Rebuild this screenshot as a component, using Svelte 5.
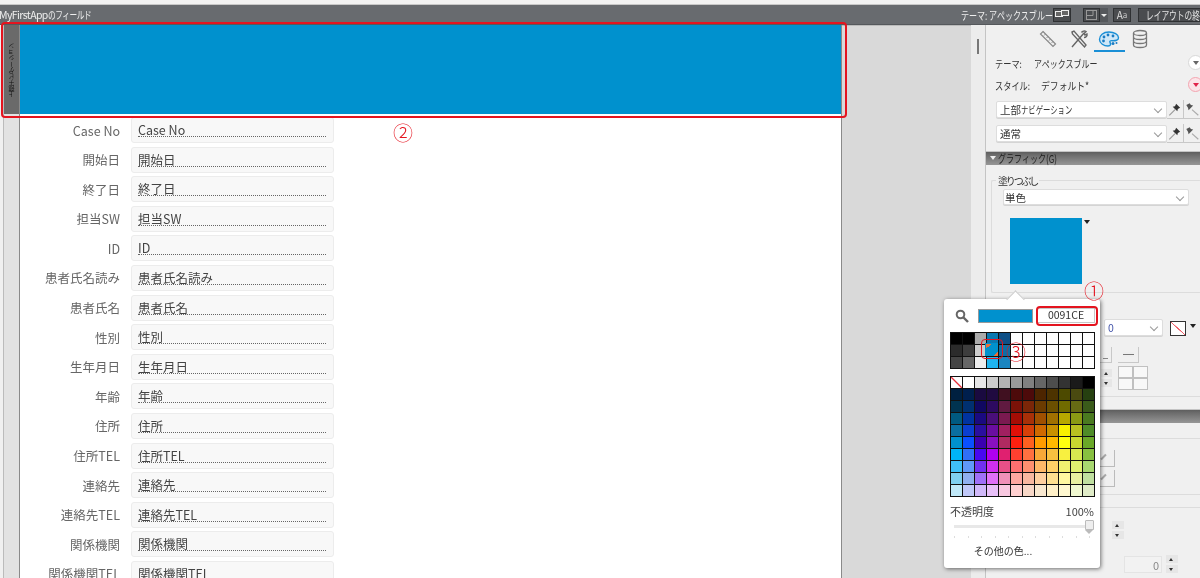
<script>
  const fields = ['Case No','開始日','終了日','担当SW','ID','患者氏名読み','患者氏名','性別','生年月日','年齢','住所','住所TEL','連絡先','連絡先TEL','関係機関','関係機関TEL'];
  const picks = [['上部','ナビゲーション'],['通常','']];
  const theme = [
    ['#000','#000','#aaa','#0b78b0','#0e4f86','#fff','#fff','#fff','#fff','#fff','#fff','#fff'],
    ['#2b2b2b','#3d3d3d','#ccc','#0091ce','#0d6ea5','#fff','#fff','#fff','#fff','#fff','#fff','#fff'],
    ['#444','#666','#eee','#1fb5f0','#1a85c0','#fff','#fff','#fff','#fff','#fff','#fff','#fff']
  ];
  const swatches = [
    ['none','#fff','#e6e6e6','#ccc','#b3b3b3','#999','#808080','#666','#4d4d4d','#333','#1a1a1a','#000'],
    ['#002040','#001f4d','#1a0a40','#200a40','#401020','#4d0a0a','#4d0a0a','#4d2500','#4d3300','#4d4a00','#4a4a10','#264010'],
    ['#003350','#003070','#100860','#2d0a60','#601a40','#7a1208','#7a2608','#6b3b00','#6b4f00','#706b00','#666a14','#3a5a1a'],
    ['#005a80','#0033a0','#1a0a80','#4a0f7a','#7a1a50','#a50d05','#a83008','#a05000','#a07000','#b8a800','#8a9a14','#4a7a20'],
    ['#0a6fa0','#0b3fd0','#2a0fa0','#6a0ea0','#a02060','#e01008','#d84008','#d06a00','#c89000','#f8f000','#b8c020','#4f8c28'],
    ['#0091ce','#0a50ff','#3a00b0','#8a10c0','#b02a60','#ff2010','#ff6020','#ff9c00','#ffb800','#ffff10','#c8d830','#6aa828'],
    ['#00b4f8','#3070f8','#4808f0','#b000f0','#e02070','#ff4030','#ff7040','#f8a838','#f8c040','#f8f040','#d8e850','#88c040'],
    ['#40c0f8','#6098f8','#7030f0','#d030f0','#e85088','#ff7070','#ff9070','#ffb868','#ffd068','#f0f070','#e0f070','#a8d870'],
    ['#80d0f0','#90b0f0','#a070f8','#e070f8','#f090b8','#ffa8a0','#f8b8a0','#ffd0a0','#ffe090','#fff8a0','#e8f0a0','#c0e0a0'],
    ['#c0e8f8','#c0c8f8','#d0b8f8','#e8c0f8','#f8c8e0','#ffd0d0','#f8d8c8','#f8e8d0','#fff0c8','#fff8d0','#f0f8d0','#e0ecc8']
  ];
</script>

<div class="app">
  <div class="topstrip"></div>
  <header class="topbar">
    <span class="title">MyFirstApp<span class="cond c73">のフィールド</span></span>
    <div class="tools">
      <span class="themelabel"><span class="cond c73">テーマ: アペックスブルー</span></span>
      <span class="tbtn w18">
        <svg width="14" height="9" viewBox="0 0 14 9"><rect x="0.5" y="1.5" width="7" height="5" fill="#666" stroke="#eee"/><rect x="6.5" y="0.5" width="7" height="5" fill="#666" stroke="#eee"/></svg>
      </span>
      <span class="split">
        <span class="tbtn w18">
          <svg width="11" height="10" viewBox="0 0 11 10"><rect x="0.5" y="0.5" width="10" height="9" fill="none" stroke="#999"/><path d="M7 .5v5H.5" fill="none" stroke="#999"/></svg>
        </span>
        <span class="caret"></span>
      </span>
      <span class="tbtn aa"><b>A</b><small>a</small></span>
      <span class="tbtn finish"><span class="cond c67">レイアウトの終了</span></span>
    </div>
  </header>

  <main class="main">
    <div class="edge"></div>
    <div class="parts">
      <div class="parttab"><span>上部ナビゲーション</span></div>
      <div class="partrest"></div>
    </div>
    <section class="layout">
      <div class="band"></div>
      <div class="rows">
        {#each fields as f}
          <div class="row">
            <span class="lab">{f}</span>
            <span class="field"><span class="ftext">{f}</span></span>
          </div>
        {/each}
      </div>
    </section>
    <div class="canvas"></div>
    <div class="gutter"><span class="handle"></span></div>

    <aside class="panel">
      <nav class="tabs">
        <span class="tab">
          <svg width="20" height="20" viewBox="0 0 20 20" fill="none" stroke="#888" stroke-width="1.2"><path d="M5 2.500 17.500 15 15 17.500 2.500 5Z"/><path d="M6 6.500l1.500-1.500M8.500 9 10 7.500M11 11.500l1.500-1.500M13.500 14 15 12.500" stroke-width=".9"/></svg>
        </span>
        <span class="tab">
          <svg width="20" height="20" viewBox="0 0 20 20" fill="none" stroke="#666" stroke-width="1.4"><path d="M3 18 15 4M12.500 3.500c1-1.500 3-2 4.500-1l-2 2 1 1.500 2-1c.5 2-1 3.500-3 3.500"/><path d="M3 3l2-1 12 14-1.500 2L3.500 5Z"/></svg>
        </span>
        <span class="tab active">
          <svg width="22" height="18" viewBox="0 0 22 18"><path d="M11 2C5 2 1.500 5.500 1.500 9.500S6 16 10 16c3 0 3-2 2-3.500-.7-1.200.5-2 2-1.800 3.500.3 6.500-.5 6.500-3C20.500 4.500 16 2 11 2Z" fill="#cfe7f7" stroke="#1a8fd6" stroke-width="1.400"/><g fill="#1a7cc4"><circle cx="6" cy="7" r="1.400"/><circle cx="10" cy="5" r="1.400"/><circle cx="15" cy="6" r="1.400"/><circle cx="5.500" cy="11" r="1.400"/><circle cx="15" cy="13.500" r="1.500"/><circle cx="18.500" cy="13" r="1"/></g></svg>
        </span>
        <span class="tab">
          <svg width="18" height="20" viewBox="0 0 18 20" fill="none" stroke="#777" stroke-width="1.300"><ellipse cx="9" cy="4" rx="6.500" ry="2.500"/><path d="M2.500 4v12c0 1.400 3 2.500 6.500 2.500s6.500-1.100 6.500-2.500V4M2.500 8c0 1.400 3 2.500 6.500 2.500S15.500 9.400 15.500 8M2.500 12c0 1.400 3 2.500 6.500 2.500s6.500-1.100 6.500-2.500"/></svg>
        </span>
      </nav>

      <div class="inforow"><span class="il t1"><span class="cond c78">テーマ:</span></span><span class="cond c76">アペックスブルー</span><span class="round"><i></i></span></div>
      <div class="inforow"><span class="il t2"><span class="cond c78">スタイル:</span></span><span class="cond c84">デフォルト*</span><span class="round pink"><i></i></span></div>

      {#each picks as s, i}
        <div class="pickrow" class:second={i === 1}>
          <span class="select wide">{s[0]}<span class="cond c70">{s[1]}</span><em class="chev"></em></span>
          <span class="pin">
            <svg width="16" height="16" viewBox="0 0 14 14"><path d="M2 12.500 7 7.500" stroke="#999" fill="none"/><path d="M8 2.500l3.500 3.500-2 1-.5 2-4-4 2-.5Z" fill="#333"/></svg>
          </span>
          <span class="pin">
            <svg width="16" height="16" viewBox="0 0 14 14"><path d="M12.500 12.500 7 7.500" stroke="#aaa" fill="none"/><path d="M2 3.500l3-1.500 1 1.500 2 .5-4 4-.5-2Z" fill="#555"/></svg>
          </span>
        </div>
      {/each}

      <h3 class="sect"><span class="cond c73">グラフィック(G)</span></h3>

      <fieldset class="group fill">
        <legend>塗りつぶし</legend>
        <span class="select solid">単色<em class="chev"></em></span>
        <div class="swatchwrap">
          <span class="bigswatch"></span>
          <span class="tinycaret"></span>
        </div>
      </fieldset>

      <div class="linegroup">
        <div class="linerow">
          <span class="select zero">0<em class="chev"></em></span>
          <span class="noline"></span>
          <span class="tinycaret"></span>
        </div>
        <div class="btnrow">
          <span class="sqbtn a"><i></i></span>
          <span class="sqbtn b"><i></i></span>
        </div>
        <div class="btnrow2">
          <span class="spin"><i class="up"></i><i class="dn"></i></span>
          <span class="corners"></span>
        </div>
      </div>

      <div class="sect tail"></div>

      <div class="lowgroup">
        <span class="tall"></span>
        <span class="tall"></span>
      </div>
      <div class="lowgroup2">
        <span class="spin big"><i class="up"></i><i class="dn"></i></span>
        <div class="valrow">
          <span class="val">0</span>
          <span class="spin big"><i class="up"></i><i class="dn"></i></span>
        </div>
      </div>
    </aside>
  </main>

  <div class="pop">
    <div class="arrow"></div>
    <div class="pophead">
      <svg class="glass" width="14" height="14" viewBox="0 0 14 14" fill="none" stroke="#666"><circle cx="5.500" cy="5.500" r="3.800" stroke-width="2"/><path d="M8.500 8.500 13 13" stroke-width="2.400"/></svg>
      <span class="current"></span>
      <span class="hex">0091CE</span>
    </div>
    <div class="grid th">
      {#each theme.flat() as c}<span style="background:{c}"></span>{/each}
    </div>
    <div class="grid sw">
      {#each swatches.flat() as c}
        {#if c === 'none'}
          <span class="nofill"></span>
        {:else}
          <span style="background:{c}"></span>
        {/if}
      {/each}
    </div>
    <div class="oprow"><span>不透明度</span><span>100%</span></div>
    <div class="slider"><span class="thumb"></span></div>
    <div class="ticks">
      {#each Array(11) as _}<i></i>{/each}
    </div>
    <div class="more">その他の色...</div>
  </div>

  <span class="selcell"></span>
  <span class="tri a"></span>
  <span class="tri b"></span>
  <div class="mark m1"></div>
  <div class="mark m2"></div>
  <div class="mark m3"></div>
  <span class="num n1">①</span>
  <span class="num n2">②</span>
  <span class="num n3">③</span>
</div>

<style>
  :global(body) { margin: 0; background: #fff; }
  .app {
    position: relative;
    width: 1200px;
    height: 578px;
    overflow: hidden;
    display: flex;
    flex-direction: column;
    font-family: "Noto Sans CJK JP", "Noto Sans", sans-serif;
    font-size: 10px;
    color: #333;
    filter: blur(.3px);
  }
  .cond { display: inline-block; transform-origin: left center; white-space: nowrap; }
  .c67 { transform: scaleX(.67); }
  .c70 { transform: scaleX(.7); }
  .c73 { transform: scaleX(.73); }
  .c76 { transform: scaleX(.76); }
  .c78 { transform: scaleX(.78); }
  .c84 { transform: scaleX(.84); }

  .topstrip { height: 4px; background: #f2f2f2; border-bottom: 1px solid #c8c8c8; flex: none; }
  .topbar {
    flex: none;
    height: 20px;
    background: #686b6f;
    border-bottom: 1px solid #55585c;
    box-sizing: border-box;
    display: flex;
    align-items: center;
    justify-content: space-between;
    color: #eee;
    white-space: nowrap;
  }
  .title { font-size: 10.500px; letter-spacing: -.6px; margin-left: -1px; }
  .tools { display: flex; align-items: center; width: 239px; flex: none; }
  .themelabel { font-size: 11px; width: 92px; flex: none; white-space: nowrap; }
  .tbtn {
    display: flex; align-items: center; justify-content: center;
    height: 14px; background: #4a4c4f; border: 1px solid #2f3133; box-sizing: border-box;
    color: #ddd; flex: none;
  }
  .w18 { width: 18px; }
  .split { display: flex; align-items: center; margin-left: 12px; background: #55585c; flex: none; }
  .split .w18 { width: 17px; }
  .caret { width: 8px; height: 14px; background: #55585c; position: relative; }
  .caret::after { content: ""; position: absolute; left: 1px; top: 6px; border: 3px solid transparent; border-top: 3px solid #eee; border-bottom: 0; }
  .aa { width: 18px; margin-left: 5px; font-size: 10px; line-height: 12px; }
  .aa b { font-weight: 400; } .aa small { font-size: 8px; color: #ccc; }
  .finish { margin-left: 7px; width: 70px; font-size: 11.500px; justify-content: flex-start; padding-left: 7px; overflow: hidden; white-space: nowrap; color: #e4e4e4; }

  .main { flex: 1; display: flex; min-height: 0; background: #d9d9d9; }
  .edge { width: 3px; background: #f0f0f0; flex: none; }
  .parts { width: 16px; flex: none; display: flex; flex-direction: column; border-left: 1px solid #bbb; box-sizing: border-box; }
  .parttab { height: 89px; background: #6a6a6a; display: flex; align-items: center; justify-content: center; flex: none; }
  .parttab span { writing-mode: vertical-rl; transform: rotate(180deg); font-size: 6px; color: #111; white-space: nowrap; }
  .partrest { flex: 1; background: #e2e2e2; }

  .layout {
    width: 823px; flex: none; box-sizing: border-box;
    background: #fff; border-left: 1px solid #8a8a8a; border-right: 1px solid #8a8a8a;
    display: flex; flex-direction: column;
  }
  .band { height: 89px; background: #0091ce; flex: none; }
  .rows { padding-top: 3px; display: flex; flex-direction: column; gap: 3.600px; }
  .row { display: flex; align-items: center; height: 26px; flex: none; }
  .lab { width: 100px; text-align: right; font-size: 12.500px; color: #666; white-space: nowrap; flex: none; }
  .field {
    margin-left: 11px; width: 203px; height: 26px; box-sizing: border-box;
    background: #f8f8f8; border: 1px solid #ececec; border-radius: 3px;
    display: flex; align-items: center; padding: 0 7px 0 6px;
    flex: none;
  }
  .ftext { flex: 1; font-size: 12.500px; line-height: 13px; color: #444; border-bottom: 1px dotted #666; white-space: nowrap; }

  .canvas { flex: 1; border-top: 1px solid #bbb; }
  .gutter { width: 14px; flex: none; background: #ececec; position: relative; padding: 14px 0 0 6px; box-sizing: border-box; }
  .handle { display: block; width: 2px; height: 15px; background: #777; }

  .panel {
    width: 215px; flex: none; box-sizing: border-box;
    background: #f0f0f0; border-left: 1px solid #c4c4c4;
    display: flex; flex-direction: column; overflow: hidden;
  }
  .tabs { display: flex; justify-content: center; height: 27px; padding-left: 2px; flex: none; box-sizing: border-box; }
  .tab { width: 30.500px; display: flex; align-items: center; justify-content: center; border-bottom: 2px solid transparent; padding-top: 2px; box-sizing: border-box; }
  .tab.active { border-bottom-color: #1a8fd6; }
  .inforow { display: flex; align-items: center; height: 22px; padding-left: 9px; font-size: 10.500px; color: #333; white-space: nowrap; flex: none; position: relative; }
  .il.t1 { width: 39px; }
  .il.t2 { width: 46px; }
  .round { position: absolute; left: 202px; top: 3px; width: 15px; height: 15px; border-radius: 50%; background: #fff; border: 1px solid #d8d8d8; box-sizing: border-box; display: flex; align-items: center; justify-content: center; }
  .round i { border: 3px solid transparent; border-top: 4px solid #666; border-bottom: 0; }
  .round.pink { border-color: #f3a5b0; background: #fbe4e8; }
  .round.pink i { border-top-color: #e0244a; }

  .pickrow { display: flex; align-items: center; margin: 4px 0 0 10px; height: 18px; flex: none; }
  .pickrow.second { margin-top: 6px; }
  .select {
    display: flex; align-items: center; position: relative; background: #fff;
    border: 1px solid #ddd; border-radius: 2px; box-sizing: border-box;
    font-size: 10.500px; color: #333; padding-left: 3px; white-space: nowrap;
    box-shadow: 0 1px 0 #d4d4d4;
  }
  .wide { width: 173px; height: 17px; }
  .chev { position: absolute; right: 5px; top: 4px; width: 5px; height: 5px; border-right: 1px solid #999; border-bottom: 1px solid #999; transform: rotate(45deg); }
  .pin { width: 16px; height: 18px; flex: none; display: flex; align-items: center; justify-content: center; border-bottom: 1px solid #c8c8c8; }
  .pin:first-of-type { margin-left: 2px; }
  .pin + .pin { border-left: 1px solid #c8c8c8; }

  .sect {
    margin: 9px 0 0; height: 14px; box-sizing: border-box; font-size: 11px; font-weight: 400; color: #222;
    background: linear-gradient(#5e5e5e, #6b6b6b 20%, #969696); padding-left: 12px; line-height: 13px; position: relative; flex: none;
    border-top: 1px solid #c4c4c4;
  }
  .sect::before { content: ""; position: absolute; left: 4px; top: 4px; border: 3px solid transparent; border-top: 4px solid #eee; border-bottom: 0; }
  .sect.tail { margin-top: 12px; }
  .sect.tail::before { display: none; }

  .group { border: 1px solid #dcdcdc; border-radius: 2px; margin: 0; box-sizing: border-box; flex: none; }
  .fill { margin: 10px 0 0 5px; padding: 0 0 0 11px; height: 118px; min-width: 0; border-right: 0; width: 210px; }
  .fill legend { font-size: 10px; padding: 0 2px; margin-left: -7px; line-height: 11px; letter-spacing: -2.200px; }
  .solid { width: 186px; height: 16px; margin-top: 3px; padding-left: 1px; }
  .swatchwrap { display: flex; margin: 13px 0 0 7px; }
  .bigswatch { width: 72px; height: 66px; background: #0091ce; display: block; }
  .tinycaret { display: block; width: 0; height: 0; border: 3px solid transparent; border-top: 4px solid #222; border-bottom: 0; margin: 2px 0 0 2px; flex: none; }

  .linegroup { height: 104px; padding: 26px 0 0 118px; border-bottom: 1px solid #dcdcdc; box-sizing: border-box; flex: none; }
  .linerow { display: flex; align-items: flex-start; gap: 7px; height: 18px; }
  .zero { width: 59px; height: 17px; padding-left: 3px; color: #45a; flex: none; }
  .noline { width: 16px; height: 15px; margin-top: 2px; background: linear-gradient(to top right, #fff 47%, #f0606a 48%, #f0606a 52%, #fff 53%); border: 1px solid #333; box-sizing: border-box; flex: none; }
  .linerow .tinycaret { margin: 5px 0 0 -3px; }
  .btnrow { display: flex; margin: 10px 0 0 -4px; }
  .sqbtn { height: 16px; box-sizing: border-box; border-right: 1px solid #c8c8c8; border-bottom: 1px solid #c8c8c8; display: flex; align-items: center; justify-content: center; flex: none; }
  .sqbtn.a { width: 12px; margin-right: 6px; padding: 8px 0 0 0; }
  .sqbtn.a i { width: 5px; height: 1px; background: #888; }
  .sqbtn.b { width: 21px; }
  .sqbtn i { display: block; width: 11px; height: 5px; background: linear-gradient(#eee, #eee 40%, #777 40%, #777 60%, #eee 60%); }
  .btnrow2 { display: flex; align-items: flex-start; margin: 3px 0 0 -3px; }
  .spin { display: flex; flex-direction: column; gap: 2px; width: 11px; margin-top: 3px; flex: none; }
  .spin i { display: block; height: 8px; background: #e6e6e6; position: relative; }
  .spin i::after { content: ""; position: absolute; left: 3px; top: 3px; border: 2.500px solid transparent; }
  .spin .up::after { border-bottom: 3px solid #333; border-top: 0; }
  .spin .dn::after { border-top: 3px solid #333; border-bottom: 0; }
  .corners { margin-left: 6px; width: 30px; height: 24px; box-sizing: border-box; border: 1px solid #c0c0c0; background:
    linear-gradient(#c0c0c0, #c0c0c0) center / 2px 100% no-repeat,
    linear-gradient(#c0c0c0, #c0c0c0) center / 100% 2px no-repeat, #f8f8f8; }

  .lowgroup { margin-top: 15px; padding: 11px 0 0 0; border-top: 1px solid #dcdcdc; border-bottom: 1px solid #dcdcdc; display: flex; flex-direction: column; gap: 3px; flex: none; height: 57px; box-sizing: border-box; }
  .tall { width: 129px; height: 17px; border-right: 1px solid #bbb; border-bottom: 1px solid #bbb; box-sizing: border-box; flex: none; position: relative; }
  .tall::after { content: ""; position: absolute; right: 7px; top: 6px; width: 7px; height: 2px; background: #aaa; transform: rotate(-45deg); }
  .lowgroup2 { margin-top: 12px; border-top: 1px solid #dcdcdc; padding: 13px 0 0 126px; flex: 1; display: flex; flex-direction: column; }
  .spin.big { width: 12px; margin: 0; }
  .valrow { display: flex; align-items: center; gap: 4px; margin-top: 16px; margin-left: 12px; }
  .val { width: 38px; height: 17px; box-sizing: border-box; text-align: right; font-size: 11px; line-height: 16px; padding-right: 2px; color: #8a8a8a; background: #f2f2f2; border: 1px solid #e4e4e4; }

  .pop {
    position: absolute; left: 944px; top: 299px; width: 156px; height: 269px; box-sizing: border-box;
    background: #fff; border-radius: 3px; box-shadow: 1px 1px 4px rgba(0,0,0,.55);
    padding: 8px 6px 0;
    display: flex; flex-direction: column;
  }
  .arrow { position: absolute; left: 65px; top: -6px; width: 13px; height: 13px; background: #fff; transform: rotate(45deg); border-left: 1px solid #ccc; border-top: 1px solid #ccc; box-sizing: border-box; }
  .pophead { display: flex; align-items: center; height: 17px; flex: none; position: relative; }
  .glass { margin-left: 5px; flex: none; }
  .current { margin-left: 9px; width: 55px; height: 14px; box-sizing: border-box; background: #0091ce; border: 1px solid #999; flex: none; }
  .hex { margin-left: 4px; width: 58px; height: 15px; box-sizing: border-box; border: 1px solid #c8c8c8; font-size: 10.500px; line-height: 12px; text-align: center; color: #333; flex: none; }
  .grid { display: grid; grid-template-columns: repeat(12, 1fr); width: 145px; box-sizing: border-box; border-top: 1px solid #111; border-left: 1px solid #111; flex: none; }
  .grid span { height: 11px; border-right: 1px solid #111; border-bottom: 1px solid #111; display: block; }
  .th { margin-top: 8px; }
  .sw { margin-top: 7px; }
  .nofill { background: linear-gradient(to top right, #fff 45%, #e8303a 46%, #e8303a 54%, #fff 55%); }
  .oprow { display: flex; justify-content: space-between; margin-top: 7px; width: 144px; font-size: 11px; line-height: 14px; color: #444; flex: none; }
  .slider { width: 136px; height: 3px; margin: 7px 0 0 4px; background: #e8e8e8; position: relative; flex: none; }
  .thumb { position: absolute; right: -4px; top: -5px; width: 9px; height: 10px; background: #eee; border: 1px solid #bbb; box-sizing: border-box; border-radius: 1px 1px 0 0; }
  .thumb::after { content: ""; position: absolute; left: -1px; top: 9px; border: 4.500px solid transparent; border-top: 4px solid #bbb; border-bottom: 0; }
  .ticks { display: flex; justify-content: space-between; width: 136px; margin: 8px 0 0 4px; flex: none; }
  .ticks i { width: 1px; height: 2px; background: #ddd; display: block; }
  .more { margin-top: 5px; text-align: center; font-size: 10px; color: #333; width: 106px; flex: none; }

  .mark { position: absolute; border: 2px solid #e4141f; border-radius: 4px; box-sizing: border-box; }
  .m1 { left: 1036px; top: 306px; width: 62px; height: 20px; }
  .m2 { left: 1px; top: 22px; width: 846px; height: 96px; }
  .m3 { left: 981px; top: 339px; width: 22px; height: 20px; border-width: 1.500px; }
  .num { position: absolute; color: #e4141f; font-size: 20px; line-height: 20px; font-weight: 300; }
  .n1 { left: 1084px; top: 281px; }
  .n2 { left: 393px; top: 123px; }
  .n3 { left: 1006px; top: 342px; }
  .selcell { position: absolute; left: 985px; top: 343px; width: 13px; height: 13px; background: #0091ce; }
  .tri { position: absolute; width: 5px; height: 5px; }
  .tri.a { left: 986px; top: 344px; background: linear-gradient(135deg, #e8703a 50%, transparent 50%); }
  .tri.b { left: 993px; top: 351px; background: linear-gradient(135deg, transparent 50%, #e8703a 50%); }
</style>
